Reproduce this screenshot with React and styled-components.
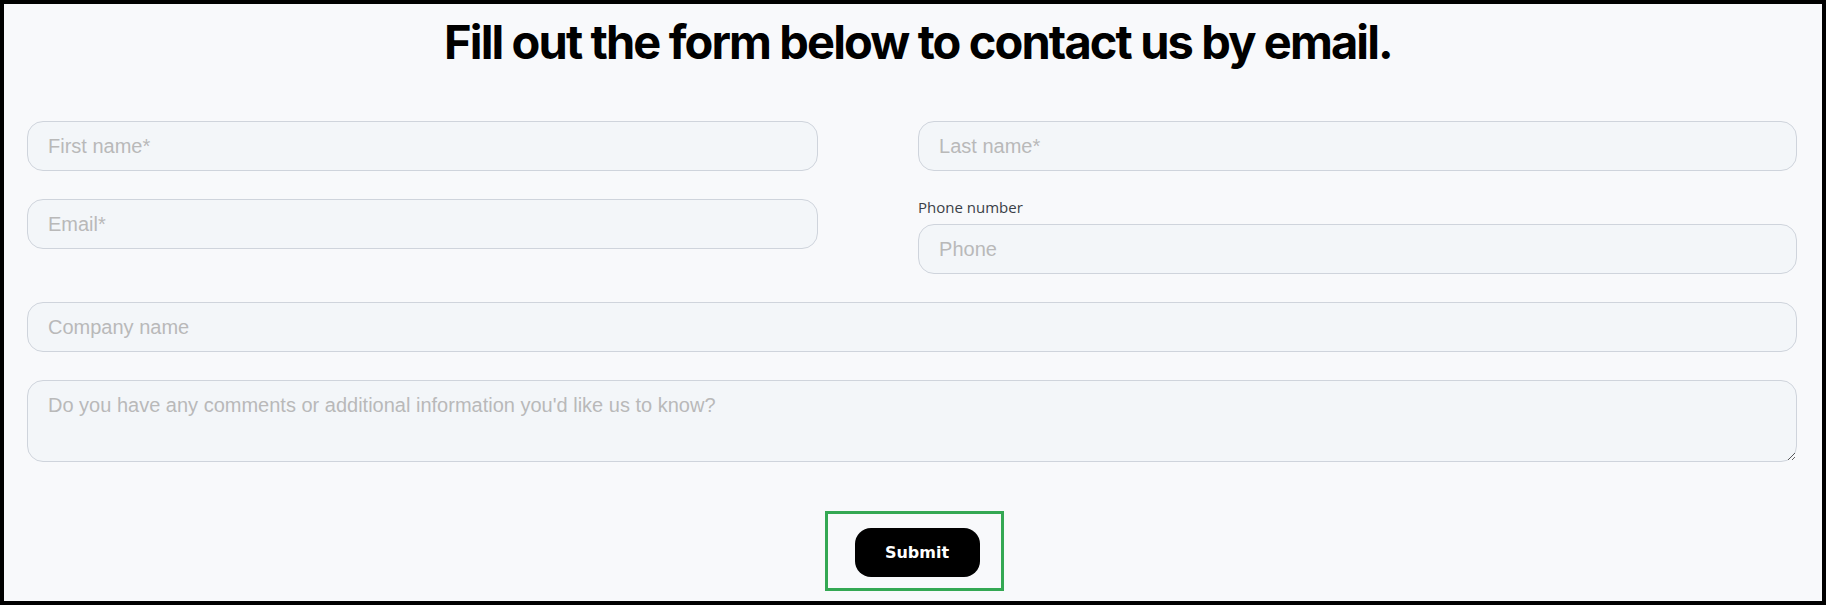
import React from 'react'
import styled, { createGlobalStyle } from 'styled-components'

const GlobalStyle = createGlobalStyle`
    html, body {
        margin: 0;
        padding: 0;
    }

    * {
        box-sizing: border-box;
    }
`

function App() {
    return (
        <>
            <GlobalStyle />
            <Frame>
                <Title>Fill out the form below to contact us by email.</Title>
                <Form onSubmit={(e) => e.preventDefault()}>
                    <Grid>
                        <Field>
                            <Input type="text" placeholder="First name*" />
                        </Field>
                        <Field>
                            <Input type="text" placeholder="Last name*" />
                        </Field>
                        <Field>
                            <Input type="email" placeholder="Email*" />
                        </Field>
                        <Field>
                            <Label htmlFor="phone">Phone number</Label>
                            <Input id="phone" type="tel" placeholder="Phone" />
                        </Field>
                        <Field wide>
                            <Input type="text" placeholder="Company name" />
                        </Field>
                        <Field wide>
                            <TextArea placeholder="Do you have any comments or additional information you'd like us to know?" />
                        </Field>
                    </Grid>
                    <SubmitRow>
                        <SubmitBox>
                            <SubmitButton type="submit">Submit</SubmitButton>
                        </SubmitBox>
                    </SubmitRow>
                </Form>
            </Frame>
        </>
    )
}

export default App

const Frame = styled.div`
    width: 1826px;
    height: 605px;
    border: 4px solid #000;
    background-color: #f8f9fb;
    padding: 10px 25px 0 23px;
    overflow: hidden;
`

const Title = styled.h1`
    margin: 0;
    padding-left: 12px;
    text-align: center;
    font-family: Inter, 'Liberation Sans', sans-serif;
    font-weight: 700;
    font-size: 47px;
    line-height: 1.2;
    letter-spacing: -0.04em;
    color: #000;
`

const Form = styled.form`
    margin-top: 51px;
`

const Grid = styled.div`
    display: grid;
    grid-template-columns: 45fr 50fr;
    column-gap: 100px;
    row-gap: 28px;
    align-items: start;
`

const Field = styled.div`
    display: flex;
    flex-direction: column;
    grid-column: ${(p) => (p.wide ? '1 / -1' : 'auto')};
`

const Label = styled.label`
    font-family: 'Open Sans', 'Noto Sans', sans-serif;
    font-size: 15px;
    line-height: 17px;
    color: #3a3f47;
    margin-bottom: 8px;
`

const Input = styled.input`
    height: 50px;
    width: 100%;
    padding: 0 20px;
    border: 1px solid #cfd4dc;
    border-radius: 16px;
    background-color: #f3f6f9;
    font-family: 'Liberation Sans', Arial, sans-serif;
    font-size: 20px;
    color: #333;
    outline: none;

    &::placeholder {
        color: #b9b9b9;
    }
`

const TextArea = styled.textarea`
    height: 82px;
    width: 100%;
    padding: 13px 20px;
    border: 1px solid #cfd4dc;
    border-radius: 16px;
    background-color: #f3f6f9;
    font-family: 'Liberation Sans', Arial, sans-serif;
    font-size: 20px;
    color: #333;
    outline: none;
    resize: vertical;

    &::placeholder {
        color: #b9b9b9;
    }
`

const SubmitRow = styled.div`
    display: flex;
    justify-content: center;
    margin-top: 49px;
    padding-left: 5px;
`

const SubmitBox = styled.div`
    width: 179px;
    height: 80px;
    border: 3px solid #34a853;
    padding: 2px 0 0 5px;
    display: flex;
    align-items: center;
    justify-content: center;
`

const SubmitButton = styled.button`
    width: 125px;
    height: 49px;
    border: none;
    border-radius: 16px;
    background-color: #000;
    color: #fff;
    font-family: Verdana, 'DejaVu Sans', sans-serif;
    font-weight: 700;
    font-size: 16px;
    cursor: pointer;
`
